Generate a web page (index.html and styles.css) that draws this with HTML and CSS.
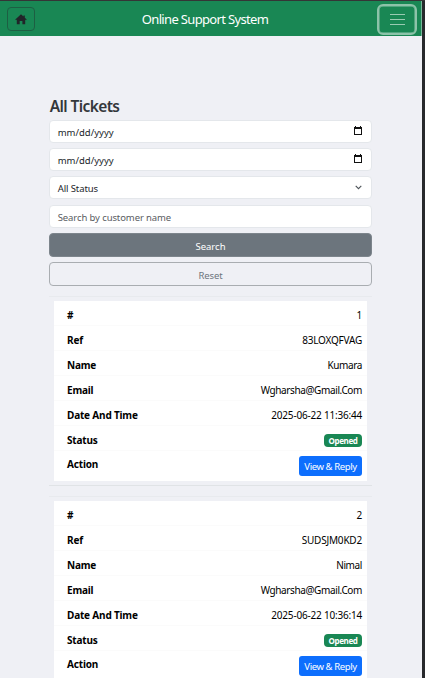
FILE: index.html
```html
<!DOCTYPE html>
<html lang="en">
<head>
<meta charset="utf-8">
<title>Online Support System</title>
<link rel="stylesheet" href="styles.css">
</head>
<body>
<div class="page">
  <header class="navbar">
    <button class="home" aria-label="Home">
      <svg width="12" height="11" viewBox="0 0 12 11"><path d="M6 .2 8.5 2.5V1.4h1.3v2.3L11.7 5.5l-.7.7-.8-.6V10.3H7.4V7H4.7v3.3H1.8V5.6L1 6.2l-.7-.7Z" fill="#212529"/></svg>
    </button>
    <span class="brand">Online Support System</span>
    <button class="toggler" aria-label="Menu">
      <svg width="15" height="13" viewBox="0 0 15 13"><path d="M0 1.5h15M0 6.5h15M0 11.5h15" stroke="#99cbb2" stroke-width="1"/></svg>
    </button>
  </header>
  <main class="content">
    <h1 class="title">All Tickets</h1>
    <div class="filters">
      <div class="field"><span>mm/dd/yyyy</span>
        <svg class="cal" width="8" height="9" viewBox="0 0 8 9"><path d="M1 0h1v1h4V0h1v1h1v8H0V1h1ZM1 3V8h6V3Z" fill="#111" fill-rule="evenodd"/></svg></div>
      <div class="field"><span>mm/dd/yyyy</span>
        <svg class="cal" width="8" height="9" viewBox="0 0 8 9"><path d="M1 0h1v1h4V0h1v1h1v8H0V1h1ZM1 3V8h6V3Z" fill="#111" fill-rule="evenodd"/></svg></div>
      <div class="field select"><span>All Status</span>
        <svg class="chevron" width="7" height="5" viewBox="0 0 7 5"><path d="m.7.8 2.8 2.8L6.3.8" fill="none" stroke="#4d5358" stroke-width="1.1"/></svg></div>
      <div class="field placeholder"><span>Search by customer name</span></div>
      <button class="btn search">Search</button>
      <button class="btn reset">Reset</button>
    </div>
    <section class="ticket">
      <dl class="card">
        <div class="row"><dt>#</dt><dd>1</dd></div>
        <div class="row"><dt>Ref</dt><dd>83LOXQFVAG</dd></div>
        <div class="row"><dt>Name</dt><dd class="tight">Kumara</dd></div>
        <div class="row"><dt>Email</dt><dd class="tight">Wgharsha@Gmail.Com</dd></div>
        <div class="row"><dt>Date And Time</dt><dd>2025-06-22 11:36:44</dd></div>
        <div class="row"><dt>Status</dt><dd class="badge">Opened</dd></div>
        <div class="row action"><dt>Action</dt><dd class="view">View &amp; Reply</dd></div>
      </dl>
    </section>
    <section class="ticket">
      <dl class="card">
        <div class="row"><dt>#</dt><dd>2</dd></div>
        <div class="row"><dt>Ref</dt><dd>SUDSJM0KD2</dd></div>
        <div class="row"><dt>Name</dt><dd class="tight">Nimal</dd></div>
        <div class="row"><dt>Email</dt><dd class="tight">Wgharsha@Gmail.Com</dd></div>
        <div class="row"><dt>Date And Time</dt><dd>2025-06-22 10:36:14</dd></div>
        <div class="row"><dt>Status</dt><dd class="badge">Opened</dd></div>
        <div class="row action"><dt>Action</dt><dd class="view">View &amp; Reply</dd></div>
      </dl>
    </section>
  </main>
</div>
</body>
</html>
```
FILE: styles.css
```css
* { box-sizing: border-box; }
html { height: 100%; overflow: hidden; background: #27292c; }
body {
  margin: 0;
  height: 678px;
  overflow: hidden;
  border-top: 1px solid #343536;
  font: 10px/15px "Noto Sans", sans-serif;
  color: #212529;
}
button { font: inherit; padding: 0; margin: 0; }
.page { width: 422px; height: 677px; overflow: hidden; background: #eff0f5; }
.navbar {
  display: flex;
  align-items: center;
  justify-content: space-between;
  height: 35px;
  padding: 0 4px 0 7px;
  background: #198754;
  border-right: 1px solid #75b798;
}
.home {
  display: flex;
  align-items: center;
  justify-content: center;
  width: 28px;
  height: 24px;
  margin-top: 1px;
  background: none;
  border: 1px solid #1d5f43;
  border-radius: 4px;
}
.brand {
  color: #fff;
  font-size: 13px;
  letter-spacing: -0.66px;
  margin-right: 2px;
  margin-top: 2px;
}
.toggler {
  display: flex;
  align-items: center;
  justify-content: center;
  width: 40px;
  height: 31px;
  margin-top: 1px;
  background: none;
  border: 2.5px solid #8cc3a9;
  border-radius: 6px;
  box-shadow: inset 0 0 0 0.5px #8cc3a9;
}
.content { width: 323px; margin-left: 49px; padding-top: 60px; }
.title {
  margin: 0;
  height: 23.5px;
  padding-left: 0.7px;
  font-size: 15.5px;
  line-height: 21px;
  font-weight: 600;
  letter-spacing: -0.6px;
  color: #33373b;
}
.filters { display: flex; flex-direction: column; gap: 5.4px; }
.field {
  display: flex;
  align-items: center;
  justify-content: space-between;
  height: 23px;
  padding: 2px 9px 0 7.7px;
  background: #fff;
  border: 1px solid #e4e7eb;
  border-radius: 4px;
  font-size: 9.5px;
}
.select { letter-spacing: -0.1px; }
.cal { margin-top: -3px; }
.chevron { margin-top: -2px; }
.placeholder { color: #595c5f; letter-spacing: -0.1px; }
.btn {
  height: 24px;
  padding-top: 2px;
  border-radius: 4px;
  font-size: 9.5px;
}
.search { color: #fff; background: #6c757d; border: 1px solid #7d858c; }
.reset {
  color: #6c757d;
  background: transparent;
  border: 1px solid #a9adb1;
  letter-spacing: -0.15px;
}
.ticket {
  height: 190px;
  margin: 10px 0;
  padding: 4px 5px;
  border-top: 1px solid #e8eaee;
  border-bottom: 1px solid #e0e3e6;
}
.card { margin: 0; height: 180px; background: #fff; color: #000; }
.row {
  display: flex;
  align-items: center;
  justify-content: space-between;
  height: 25px;
  padding: 4px 5px 0 13px;
  border-bottom: 1px solid #fbfbfb;
}
.row.action { height: 30px; border: 0; align-items: flex-start; padding-top: 6px; }
dt { font-weight: 700; letter-spacing: -0.18px; }
dd { margin: 0; letter-spacing: -0.2px; }
.tight { letter-spacing: -0.38px; }
.badge {
  width: 38px;
  height: 13px;
  text-align: center;
  background: #198754;
  color: #fff;
  border-radius: 4px;
  font-size: 8px;
  line-height: 13px;
  font-weight: 700;
  letter-spacing: -0.35px;
}
.view {
  width: 63px;
  height: 20px;
  margin-top: -1px;
  text-align: center;
  background: #0d6efd;
  color: #fff;
  border-radius: 3px;
  font-size: 9.5px;
  line-height: 21px;
  letter-spacing: -0.4px;
}
```
